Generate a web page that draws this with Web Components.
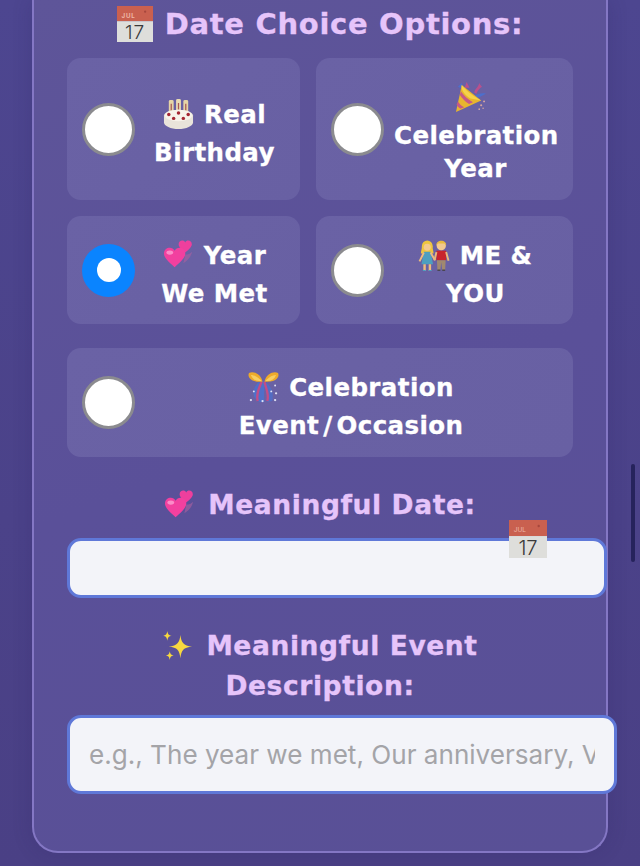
<!DOCTYPE html>
<html lang="en">
<head>
<meta charset="utf-8">
<title>Date Choice Options</title>
<style>
html,body{margin:0;padding:0;height:866px;overflow:hidden;background:#4b4389}
body{font-family:"DejaVu Sans",sans-serif}
.slash{padding:0 4px}
.nb{white-space:nowrap}
</style>
</head>
<body>
<x-page>
  <x-panel>
    <x-heading emoji="calendar" size="36">Date Choice Options:</x-heading>
    <x-options>
      <x-option emoji="cake">Real Birthday</x-option>
      <x-option emoji="popper">Celebration Year</x-option>
      <x-option emoji="hearts" checked>Year We Met</x-option>
      <x-option emoji="couple">ME &amp; YOU</x-option>
      <x-option emoji="confetti" wide>Celebration <span class="nb"><span>Event</span><span class="slash">/</span><span>Occasion</span></span></x-option>
    </x-options>
    <x-field label="Meaningful Date:" emoji="hearts" kind="date" top="28" gap="13"></x-field>
    <x-field label="Meaningful Event Description:" emoji="sparkles" kind="text" top="28" gap="9"
      placeholder="e.g., The year we met, Our anniversary, Valentine's Day"></x-field>
  </x-panel>
  <x-scrollbar></x-scrollbar>
</x-page>
<script>
const HEART = "M12 21C5 15 1 11 1 7 1 3 4 1 7 1c2 0 4 1 5 3 1-2 3-3 5-3 3 0 6 2 6 6 0 4-4 8-11 14z";
const ART = {
  calendar: `<rect width="32" height="13.500" fill="#c9604f"/><rect y="13.500" width="32" height="18.500" fill="#dededb"/>
    <text x="4" y="10.500" font-family="Inter,sans-serif" font-size="5.500" fill="#eeb7a8">JUL</text>
    <circle cx="25" cy="5" r="1" fill="#a7473d"/>
    <text x="16" y="29.500" text-anchor="middle" font-family="Inter,sans-serif" font-size="17" font-weight="300" fill="#3a3a3a">17</text>`,
  cake: `<rect x="6" y="1" width="5" height="15" rx="1.500" fill="#e6d5a6"/><rect x="13.500" y="0" width="5" height="15" rx="1.500" fill="#eadcb4"/><rect x="21" y="1" width="5" height="15" rx="1.500" fill="#e6d5a6"/>
    <path d="M8.500 5v7M16 4v7M23.500 5v7" stroke="#a85a55" stroke-width="1.300"/>
    <path d="M1 17c0-3 6-6 15-6s15 3 15 6v7c0 4-7 7-15 7S1 28 1 24z" fill="#e9e4da"/>
    <ellipse cx="16" cy="17" rx="14" ry="6" fill="#f7f3ea"/>
    <g fill="#a52632"><circle cx="6" cy="16" r="1.800"/><circle cx="16" cy="14.500" r="1.800"/><circle cx="26" cy="16" r="1.800"/><circle cx="11" cy="20" r="1.800"/><circle cx="21" cy="20" r="1.800"/></g>`,
  popper: `<path d="M3 5l6 3-2-7zM21 14c3-2 7-3 11-2-3 1-6 4-10 4z" fill="#4c6fcd"/>
    <path d="M10 6l2-6 3 6zM20 11c0-4 4-5 5-10 1 2 2 3 3 4-2 1-5 4-6 7z" fill="#b8508d"/>
    <path d="M7 3 27 19 1 31z" fill="#e8b52e"/><path d="M7 3c-1 4 2 10 9 14l11 2C20 15 11 9 7 3z" fill="#f5d24a"/>
    <path d="M6 9.500c3 4.500 7 8 12.500 11.500l-4 1.800C10 20 7.500 17 5 13.500zM3 20c1.700 2.800 3.800 4.500 6.500 6l-3.800 1.700C3.500 26.400 2.300 24.800 1.700 23.200z" fill="#c65a86"/>
    <g fill="#d8a7a0"><circle cx="27" cy="24" r="1.100"/><circle cx="30" cy="20" r="1"/><circle cx="25" cy="28" r=".9"/><circle cx="29" cy="27" r=".8"/></g>`,
  hearts: `<path d="M23 15c3 0 5-1 7-3-1 5-4 9-9 12z" fill="#a8609f" opacity=".65"/>
    <path d="${HEART}" transform="translate(15.500 0) scale(.62)" fill="#ee3f9d"/>
    <path d="${HEART}" transform="translate(0 7) scale(1)" fill="#f2409f"/>
    <ellipse cx="7" cy="13" rx="3.500" ry="2.200" fill="#fb8cc8"/>`,
  couple: `<circle cx="8.500" cy="6" r="5.500" fill="#eec53f"/><path d="M3 6c0 4-1 5-1 8h13c0-3-1-4-1-8z" fill="#eec53f"/><circle cx="8.500" cy="7.500" r="3.600" fill="#f4c98e"/>
    <path d="M5 12h7l2.500 13h-12z" fill="#4d9fc0"/><path d="M4.500 25H7v7H4.500zM10 25h2.500v7H10z" fill="#edbb7e"/><path d="M4 31h3v1H4zM10 31h3v1h-3z" fill="#4d9fc0"/>
    <path d="M5 13 .5 22M12 13l4.500 8" stroke="#edbb7e" stroke-width="2" fill="none"/>
    <circle cx="23" cy="6" r="4.800" fill="#f2c98f"/><path d="M18 6c-1-7 11-7 10 0l-1.500-2.500h-7z" fill="#e8bb40"/>
    <rect x="18" y="11" width="10" height="10" fill="#c8242c"/><path d="M18.500 21h9l-.5 10h-3l-1-8-1 8h-3z" fill="#a08970"/><path d="M19 30.500h3V32h-3zM24 30.500h3V32h-3z" fill="#4a4650"/>
    <path d="M18 12.500 16 21M28 12.500l2.500 9" stroke="#e9b87b" stroke-width="2" fill="none"/>`,
  confetti: `<path d="M12 31C4 27 3 18 12 9l6 1c-1 7-2 14-1 21z" fill="#4f6fc9"/>
    <path d="M17 10c7 4 10 11 8 20l-5 1c1-7 0-14-4-20z" fill="#4f6fc9" opacity=".85"/>
    <path d="M14 10c-2 6-6 11-4 20M17 10c1 6 5 12 3 20" stroke="#c14d88" stroke-width="2.400" fill="none"/>
    <path d="M15 10C13 1 5-1 1 1c-2 4 2 10 14 9z" fill="#eeaa2b"/><path d="M17 10c2-9 10-11 14-9 2 4-2 10-14 9z" fill="#eeaa2b"/>
    <path d="M3 3c4 0 8 3 11 6-5 1-9-1-11-6zM29 3c-4 0-8 3-11 6 5 1 9-1 11-6z" fill="#f7cf63"/>
    <g fill="#dfe0f3"><circle cx="3" cy="29" r="1.200"/><circle cx="28" cy="14" r="1"/><circle cx="29" cy="22" r="1.200"/><circle cx="28" cy="29" r="1.200"/><circle cx="24" cy="20" r="1"/><circle cx="6" cy="20" r="1"/><circle cx="15" cy="30" r="1.200"/></g>`,
  sparkles: `<g fill="#f8d83f"><path d="M19 4c1 8 3 11 12 12-9 1-11 4-12 12-1-8-3-11-12-12 9-1 11-4 12-12z"/>
    <path d="M5.500 0c.6 3.500 1.500 4.500 4.500 5-3 .5-3.900 1.500-4.500 5-.6-3.500-1.500-4.500-4.500-5 3-.5 3.900-1.500 4.500-5zM8 21c.5 3 1.300 3.800 4 4.300-2.700.5-3.500 1.300-4 4.700-.5-3.400-1.300-4.200-4-4.700 2.700-.5 3.500-1.300 4-4.300z"/></g>`
};

function define(name, css, html){
  customElements.define(name, class extends HTMLElement{
    constructor(){super();this.attachShadow({mode:"open"});}
    connectedCallback(){
      const body = typeof html==="function" ? html(this) : html;
      this.shadowRoot.innerHTML = `<style>${css}</style>${body}`;
    }
  });
}

define("x-emoji",
  `:host{--s:var(--emoji-size,31px);--b:var(--emoji-box,43px);display:inline-block;vertical-align:var(--emoji-align,-13px);height:var(--b);width:var(--s)}
   svg{display:block;width:var(--s);height:var(--s);margin-top:calc((var(--b) - var(--s)) / 2);overflow:visible}`,
  el=>`<svg viewBox="0 0 32 32" aria-hidden="true">${ART[el.getAttribute("name")]||""}</svg>`);

define("x-page",
  `:host{display:block;position:relative;width:640px;height:866px;overflow:hidden;box-sizing:border-box;padding:0 32px;
     background:linear-gradient(180deg,#4d4690 0%,#4b4289 60%,#4a4085 100%)}`,
  `<slot></slot>`);

define("x-panel",
  `:host{display:block;box-sizing:border-box;width:576px;height:853px;padding:4px 33px 0;border:2px solid #8477c4;border-top:0;
     border-radius:0 0 26px 26px;background:linear-gradient(160deg,#5e5599 0%,#5a5099 50%,#595096 100%);
     box-shadow:0 0 20px rgba(40,30,90,.2)}`,
  `<slot></slot>`);

define("x-heading",
  `:host{display:block;text-align:center;color:#e6c4fa;font-size:29px;font-weight:700;line-height:40px;letter-spacing:.7px;
     -webkit-text-stroke:.3px currentColor;--emoji-box:40px;--emoji-align:-10px}
   .e{margin-right:12px}`,
  el=>`<x-emoji class="e" name="${el.getAttribute("emoji")}" style="--emoji-size:${el.getAttribute("size")||32}px"></x-emoji><slot></slot>`);

define("x-options",
  `:host{display:grid;grid-template-columns:233px 257px;grid-template-rows:142px 108px 117px;column-gap:16px;row-gap:16px;margin-top:14px}`,
  `<slot></slot>`);

define("x-option",
  `:host{display:flex;align-items:center;gap:10px;box-sizing:border-box;padding:14px 16px 14px 15px;border-radius:14px;
     background:linear-gradient(135deg,#6a62a5,#6860a3);color:#fff;font-size:24.500px;font-weight:700;line-height:33px;letter-spacing:.4px;
     -webkit-text-stroke:.3px currentColor}
   :host([wide]){grid-column:1/-1;margin-top:8px}
   .t{flex:1;min-width:0;text-align:center;margin-top:3px}
   x-emoji{margin-right:10px}`,
  el=>`<x-radio ${el.hasAttribute("checked")?"checked":""}></x-radio>
       <div class="t"><x-emoji name="${el.getAttribute("emoji")}"></x-emoji><slot></slot></div>`);

define("x-radio",
  `:host{flex:none;display:flex;align-items:center;justify-content:center;box-sizing:border-box;width:53px;height:53px;border-radius:50%;
     background:#fff;border:3px solid #8b8b8f}
   :host([checked]){background:#0a84ff;border:0}
   :host([checked])::after{content:"";width:24px;height:24px;border-radius:50%;background:#fff}`,
  ``);

define("x-field",
  `:host{display:block}
   .l{text-align:center;color:#e6c4fa;font-size:26.500px;font-weight:700;line-height:40px;letter-spacing:.6px;
     -webkit-text-stroke:.3px currentColor;--emoji-box:40px;--emoji-align:-11px}
   .e{margin-right:13px}
   .w{position:relative;box-sizing:border-box;border:3px solid #5f78d8;border-radius:14px;background:#f3f4f9}
   input{display:block;box-sizing:border-box;width:100%;height:100%;border:0;outline:0;background:transparent;border-radius:11px;
     font:400 26.100px Inter,sans-serif;color:#333;padding:0 19px}
   input::placeholder{color:#a4a4a8;opacity:1}
   .cal{position:absolute;left:439px;top:-21px;--emoji-size:38px;--emoji-box:38px}
   :host([kind=date]) .w{width:540px;height:60px}
   :host([kind=text]) .w{width:550px;height:79px}`,
  el=>{
    const date = el.getAttribute("kind")==="date";
    return `<div class="l" style="margin-top:${el.getAttribute("top")}px"><x-emoji class="e" name="${el.getAttribute("emoji")}"></x-emoji>${el.getAttribute("label")}</div>
      <div class="w" style="margin-top:${el.getAttribute("gap")}px">
        <input type="text" aria-label="${el.getAttribute("label")}" placeholder="${el.getAttribute("placeholder")||""}">
        ${date?`<x-emoji class="cal" name="calendar"></x-emoji>`:""}
      </div>`;
  });

define("x-scrollbar",
  `:host{position:absolute;left:631px;top:464px;width:4px;height:98px;border-radius:2px;background:#26235c}`,
  ``);
</script>
</body>
</html>
